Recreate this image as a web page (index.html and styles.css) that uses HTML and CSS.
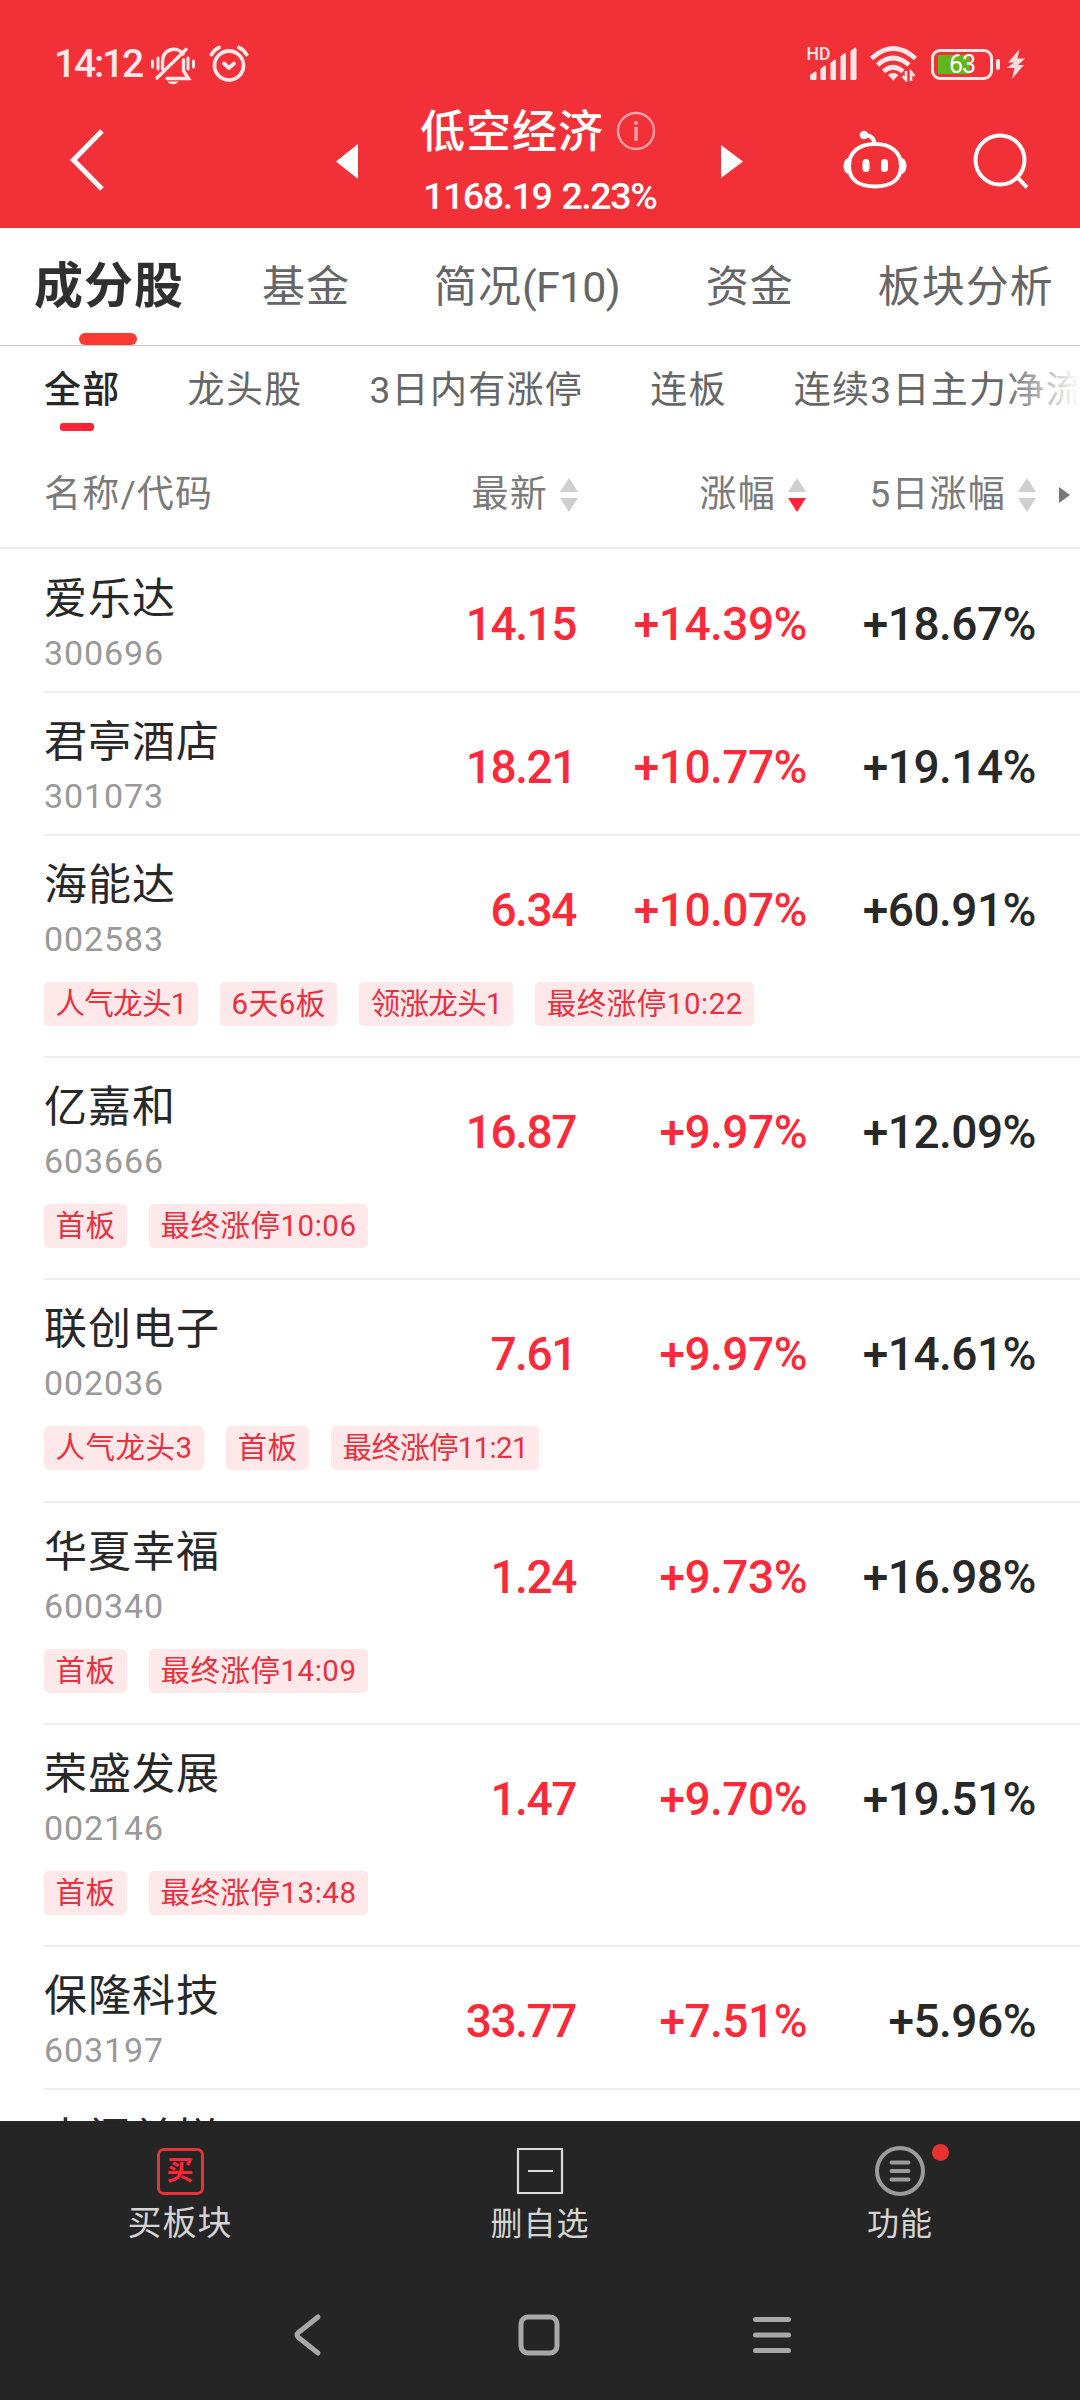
FILE: index.html
```html
<!DOCTYPE html>
<html lang="zh-CN">
<head>
    <meta charset="UTF-8">
    <meta name="viewport" content="width=device-width, initial-scale=1.0">
    <title>低空经济</title>
    <link rel="stylesheet" href="styles.css">
</head>
<body>

<header class="header">
    <div class="status-bar">
        <span class="time">14:12</span>
        <svg class="icon-mute" width="46" height="40" viewBox="0 0 46 40" fill="none" stroke="#ffe6e7" stroke-width="3.4" stroke-linecap="round">
            <path d="M2.500 15v6M8 12v11M38 12v11M43.500 15v6" stroke-width="3"/>
            <path d="M12.500 23v-7c0-14 15-16 20.500-8M33.500 14v11l5 7.500H17"/>
            <path d="M7 32L36 3.500"/>
            <path d="M17.500 35.500h11c-2 3.500-9 3.500-11 0z" fill="#ffe6e7" stroke="none"/>
        </svg>
        <svg class="icon-alarm" width="40" height="38" viewBox="0 0 40 38" fill="none" stroke="#ffe6e7" stroke-width="3.800" stroke-linecap="round" stroke-linejoin="round">
            <circle cx="20" cy="20.500" r="14.500"/>
            <path d="M15 18.500l5 4.500 5-4.500"/>
            <path d="M2.500 9.500q3-5 7.500-7M37.500 9.500q-3-5-7.500-7"/>
        </svg>
        <svg class="icon-signal" width="52" height="34" viewBox="0 0 52 34" fill="#ffe6e7">
            <text x="-.5" y="12.500" class="hd">HD</text>
            <path d="M3 32v-4l5-3.500q1.500 0 1.500 1.500v6q0 1-1 1H4q-1 0-1-1zM13.500 32V22l4-3.500q1.500 0 1.500 1.500v12q0 1-1 1h-3.500q-1 0-1-1zM23.500 32V16l4-3.500q1.500 0 1.500 1.500v18q0 1-1 1h-3.500q-1 0-1-1zM33.500 32V9.500l4-3.500q1.500 0 1.500 1.500V32q0 1-1 1h-3.500q-1 0-1-1zM43.500 32V4l4.500-3.500q1.500 0 1.500 1.500v30q0 1-1 1h-4q-1 0-1-1z"/>
        </svg>
        <svg class="icon-wifi" width="48" height="36" viewBox="0 0 48 36" fill="none" stroke="#ffe6e7" stroke-width="4.600">
            <path d="M1.500 12.500Q23 -7.500 45.500 12.500M7.500 19Q23 5 39 19M13.500 25.500Q23 17 33 25.500"/>
            <path d="M18 29q5-4 10.500 0l-5.200 5.500z" fill="#ffe6e7" stroke="none"/>
            <path d="M36 25v9l-3.500-4M41 35v-9l3.500 4" stroke-width="2.600"/>
        </svg>
        <div class="battery"><span class="battery-num">63</span></div>
        <svg class="icon-bolt" width="18" height="32" viewBox="0 0 18 32" fill="#ffdcdd">
            <path d="M12.500 1L1 14.500h6L0 20h7.500L5 31l12-14h-6l7-6.500h-7.500z"/>
        </svg>
    </div>

    <div class="title-bar">
        <svg class="icon-back" width="36" height="62" viewBox="0 0 36 62" fill="none" stroke="#fff" stroke-width="5"><path d="M33 2L4.500 31 33 60"/></svg>
        <svg class="icon-prev" width="22" height="35" viewBox="0 0 22 35" fill="#fff"><path d="M22 0v35L0 17.500z"/></svg>
        <div class="title">
            <div class="title-name">
                <span>低空经济</span>
                <svg width="40" height="40" viewBox="0 0 40 40" fill="none" stroke="#fba3a6" stroke-width="2.400">
                    <circle cx="20" cy="20" r="18"/>
                    <path d="M20 16v14" stroke-width="3.400"/>
                    <circle cx="20" cy="12" r="2.100" fill="#fba3a6" stroke="none"/>
                </svg>
            </div>
            <div class="title-index">1168.19 2.23%</div>
        </div>
        <svg class="icon-next" width="22" height="33" viewBox="0 0 22 33" fill="#fff"><path d="M0 0v33l22-16.500z"/></svg>
        <svg class="icon-robot" width="64" height="60" viewBox="0 0 64 60" fill="none" stroke="#fff" stroke-width="4">
            <path d="M32 14C48 14 58 22 58 36S48 56.500 32 56.500 6 50 6 36 16 14 32 14z"/>
            <path d="M31.500 14C31 8 27 5 21 5"/>
            <circle cx="21" cy="5" r="4.300" fill="#fff" stroke="none"/>
            <path d="M5 28c-6 2-6 14 0 16zM59 28c6 2 6 14 0 16z" fill="#fff" stroke="none"/>
            <path d="M23 32.500v6M41.500 32.500v6" stroke-width="7" stroke-linecap="round"/>
        </svg>
        <svg class="icon-search" width="56" height="56" viewBox="0 0 56 56" fill="none" stroke="#fff" stroke-width="4"><circle cx="27" cy="27" r="24.500"/><path d="M44 44l10 10.500"/></svg>
    </div>
</header>

<nav class="tabs">
    <a class="tab active">成分股</a>
    <a class="tab">基金</a>
    <a class="tab">简况<span class="f10">(F10)</span></a>
    <a class="tab">资金</a>
    <a class="tab">板块分析</a>
</nav>

<nav class="filters">
    <a class="filter active">全部</a>
    <a class="filter">龙头股</a>
    <a class="filter">3日内有涨停</a>
    <a class="filter">连板</a>
    <a class="filter">连续3日主力净流入</a>
</nav>

<div class="list-head">
    <span class="col-name">名称/代码</span>
    <span class="col">最新<i class="sort"></i></span>
    <span class="col">涨幅<i class="sort desc"></i></span>
    <span class="col">5日涨幅<i class="sort"></i></span>
    <i class="more"></i>
</div>

<main class="list">
    <div class="row">
        <div class="stock"><div class="name">爱乐达</div><div class="code">300696</div></div>
        <div class="num price up">14.15</div><div class="num up">+14.39%</div><div class="num">+18.67%</div>
    </div>
    <div class="row">
        <div class="stock"><div class="name">君亭酒店</div><div class="code">301073</div></div>
        <div class="num price up">18.21</div><div class="num up">+10.77%</div><div class="num">+19.14%</div>
    </div>
    <div class="row tagged">
        <div class="stock"><div class="name">海能达</div><div class="code">002583</div></div>
        <div class="num price up">6.34</div><div class="num up">+10.07%</div><div class="num">+60.91%</div>
        <div class="tags"><span class="tight">人气龙头1</span><span>6天6板</span><span class="tight">领涨龙头1</span><span>最终涨停10:22</span></div>
    </div>
    <div class="row tagged">
        <div class="stock"><div class="name">亿嘉和</div><div class="code">603666</div></div>
        <div class="num price up">16.87</div><div class="num up">+9.97%</div><div class="num">+12.09%</div>
        <div class="tags"><span>首板</span><span>最终涨停10:06</span></div>
    </div>
    <div class="row tagged">
        <div class="stock"><div class="name">联创电子</div><div class="code">002036</div></div>
        <div class="num price up">7.61</div><div class="num up">+9.97%</div><div class="num">+14.61%</div>
        <div class="tags"><span>人气龙头3</span><span>首板</span><span class="tight">最终涨停11:21</span></div>
    </div>
    <div class="row tagged">
        <div class="stock"><div class="name">华夏幸福</div><div class="code">600340</div></div>
        <div class="num price up">1.24</div><div class="num up">+9.73%</div><div class="num">+16.98%</div>
        <div class="tags"><span>首板</span><span>最终涨停14:09</span></div>
    </div>
    <div class="row tagged">
        <div class="stock"><div class="name">荣盛发展</div><div class="code">002146</div></div>
        <div class="num price up">1.47</div><div class="num up">+9.70%</div><div class="num">+19.51%</div>
        <div class="tags"><span>首板</span><span>最终涨停13:48</span></div>
    </div>
    <div class="row">
        <div class="stock"><div class="name">保隆科技</div><div class="code">603197</div></div>
        <div class="num price up">33.77</div><div class="num up">+7.51%</div><div class="num">+5.96%</div>
    </div>
    <div class="row">
        <div class="stock"><div class="name">中门兰拼</div></div>
    </div>
</main>

<footer class="footer">
    <div class="actions">
        <a class="action buy">
            <span class="buy-icon">买</span>
            <span>买板块</span>
        </a>
        <a class="action">
            <svg width="50" height="50" viewBox="0 0 50 50" fill="none" stroke="#dcdcdc" stroke-width="2.200"><path d="M3 3h44v44H3zM13 25h25"/></svg>
            <span>删自选</span>
        </a>
        <a class="action">
            <span class="menu-icon">
                <svg width="50" height="50" viewBox="0 0 50 50" fill="none" stroke="#9b9b9b" stroke-width="4" stroke-linecap="round"><circle cx="25" cy="25" r="23"/><path d="M16.500 16.500h17M16.500 25h17M16.500 33.500h17"/></svg>
                <i class="dot"></i>
            </span>
            <span>功能</span>
        </a>
    </div>
    <div class="system-nav">
        <svg width="42" height="44" viewBox="0 0 42 44"><path d="M33 4L13.500 19.500q-3 2.500 0 5L33 40"/></svg>
        <svg width="42" height="44" viewBox="0 0 42 44"><rect x="3" y="4" width="36" height="36" rx="7"/></svg>
        <svg width="42" height="44" viewBox="0 0 42 44"><path d="M4.500 6.500h33M4.500 22h33M4.500 37.500h33"/></svg>
    </div>
</footer>

</body>
</html>
```

FILE: styles.css
```css
* {
    box-sizing: border-box;
}
body {
    margin: 0;
    width: 1080px;
    height: 2400px;
    overflow: hidden;
    display: flex;
    flex-direction: column;
    background-color: #fff;
    color: #282828;
    font-family: Roboto, "Noto Sans CJK SC", sans-serif;
}
i {
    font-style: normal;
}
svg {
    display: block;
    flex: none;
}

/* header */
.header {
    height: 228px;
    flex: none;
    background-color: #f23038;
    color: #fff;
}
.status-bar {
    display: flex;
    align-items: center;
    height: 96px;
    padding: 32px 54px 0 54px;
    color: #ffe6e7;
}
.time {
    width: 96px;
    font-size: 39px;
    font-weight: 500;
    line-height: 40px;
    letter-spacing: -2.200px;
    white-space: nowrap;
}
.icon-mute {
    margin-top: 3px;
}
.icon-alarm {
    margin-left: 13px;
}
.icon-signal {
    margin-left: auto;
    overflow: visible;
}
.hd {
    font-size: 17.500px;
    font-weight: 500;
}
.icon-wifi {
    margin-left: 11px;
}
.battery {
    position: relative;
    width: 62px;
    height: 31px;
    margin-left: 13px;
    border: 3px solid #ffe6e7;
    border-radius: 9px;
    background: linear-gradient(#62b51b, #62b51b) 4px 3px / 32px 19px no-repeat;
    color: #fff;
    text-align: center;
}
.battery::after {
    content: "";
    position: absolute;
    right: -10px;
    top: 7px;
    width: 4px;
    height: 11px;
    border-radius: 2px;
    background-color: #ffe6e7;
}
.battery-num {
    display: block;
    font-size: 25px;
    line-height: 26px;
    letter-spacing: -1px;
}
.icon-bolt {
    margin-left: 14px;
    margin-right: 1px;
}
.title-bar {
    display: flex;
    height: 132px;
    padding: 0 50px 0 69px;
}
.icon-back {
    margin-top: 33px;
}
.icon-prev {
    margin-top: 48px;
    margin-left: 231px;
}
.title {
    width: 363px;
    padding-left: 62px;
}
.title-name {
    display: flex;
    align-items: center;
    gap: 12px;
    height: 64px;
    padding-top: 6px;
    font-size: 45px;
    font-weight: 500;
    line-height: 60px;
    letter-spacing: 1px;
    white-space: nowrap;
}
.title-name span {
    margin-top: 3px;
}
.title-index {
    font-size: 37.500px;
    font-weight: 500;
    line-height: 73px;
    letter-spacing: -1.400px;
    word-spacing: 2px;
    padding-left: 3px;
    white-space: nowrap;
}
.icon-next {
    margin-top: 49px;
}
.icon-robot {
    margin-top: 34px;
    margin-left: 100px;
}
.icon-search {
    margin-top: 37px;
    margin-left: 66px;
}

/* tabs */
.tabs {
    display: flex;
    flex: none;
    gap: 84px;
    height: 118px;
    padding-left: 34px;
    border-bottom: 1px solid #c8c8c8;
    font-size: 43px;
    line-height: 118px;
    letter-spacing: 1px;
    color: #666;
    white-space: nowrap;
}
.tab {
    position: relative;
}
.f10 {
    letter-spacing: -.800px;
    margin-right: 2px;
}
.tab.active {
    margin-right: -6px;
    color: #303030;
    font-size: 49px;
    font-weight: 700;
}
.tab.active::after {
    content: "";
    position: absolute;
    left: 45px;
    bottom: 0;
    width: 58px;
    height: 12px;
    border-radius: 6px;
    background-color: #fc3a32;
}
.filters {
    position: relative;
    display: flex;
    flex: none;
    gap: 67px;
    height: 92px;
    padding-left: 44px;
    overflow: hidden;
    font-size: 37px;
    line-height: 90px;
    letter-spacing: 1.300px;
    color: #666;
    white-space: nowrap;
}
.filters::after {
    content: "";
    position: absolute;
    top: 0;
    right: 0;
    width: 80px;
    height: 92px;
    background: linear-gradient(to right, rgba(255, 255, 255, 0), #fff);
}
.filter {
    position: relative;
}
.filter.active {
    color: #282828;
    font-weight: 500;
}
.filter.active::after {
    content: "";
    position: absolute;
    left: 16px;
    top: 77px;
    width: 34px;
    height: 8px;
    border-radius: 3px;
    background-color: #ff2436;
}

/* list */
.list-head {
    display: grid;
    grid-template-columns: 304px 230px 228px 230px auto;
    flex: none;
    height: 111px;
    padding-left: 44px;
    border-bottom: 2px solid #ededed;
    font-size: 37px;
    line-height: 114px;
    letter-spacing: 1.200px;
    color: #7a7a7a;
    white-space: nowrap;
}
.col {
    display: flex;
    justify-content: flex-end;
}
.sort {
    display: flex;
    flex-direction: column;
    align-self: center;
    gap: 6px;
    margin-left: 12px;
}
.sort::before, .sort::after {
    content: "";
    border: 9.500px solid transparent;
    border-top-width: 0;
    border-bottom: 14px solid #cfcfcf;
}
.sort::after {
    border-bottom-width: 0;
    border-top: 14px solid #cfcfcf;
}
.sort.desc::after {
    border-top-color: #ff2436;
}
.more {
    align-self: center;
    width: 0;
    margin-left: 23px;
    border: 8px solid transparent;
    border-left: 11px solid #777;
    border-right-width: 0;
}
.list {
    flex: 1;
    min-height: 0;
    padding-top: .500px;
    overflow: hidden;
}
.row {
    display: grid;
    grid-template-columns: 534px 229px 229px;
    grid-template-rows: 141px;
    height: 143px;
    margin-left: 44px;
    border-bottom: 2px solid #eee;
}
.row.tagged {
    height: 222.400px;
}
.stock {
    grid-row: 1;
    grid-column: 1;
    padding-top: 21px;
}
.name {
    font-size: 43px;
    line-height: 56px;
    letter-spacing: 1px;
}
.code {
    font-size: 34px;
    line-height: 53px;
    letter-spacing: .900px;
    color: #999;
}
.num {
    grid-row: 1;
    font-size: 46px;
    font-weight: 500;
    line-height: 148px;
    letter-spacing: -.500px;
    text-align: right;
}
.price {
    grid-column: 1;
    padding-right: 2px;
    letter-spacing: -1.400px;
}
.up {
    color: #fb2a3a;
}
.tags {
    grid-row: 2;
    grid-column: 1 / -1;
    display: flex;
    gap: 22px;
    padding-top: 5px;
}
.tags span {
    height: 44px;
    padding: 0 11.500px;
    border-radius: 5px;
    background-color: #ffe8ea;
    color: #e8303f;
    font-size: 29.500px;
    line-height: 45px;
    letter-spacing: .500px;
    white-space: nowrap;
}
.tags .tight {
    letter-spacing: -.700px;
}

/* bottom */
.footer {
    height: 279px;
    flex: none;
    background-color: #252525;
}
.actions {
    display: flex;
    height: 148px;
    padding-top: 25px;
}
.action {
    flex: 1;
    display: flex;
    flex-direction: column;
    align-items: center;
    color: #d4d4d4;
    font-size: 32px;
    line-height: 57px;
    letter-spacing: 1px;
}
.action.buy {
    font-size: 34px;
    line-height: 55px;
}
.buy-icon {
    width: 47px;
    height: 47px;
    margin: 2px 0 1px;
    border: 3px solid #e8333b;
    border-radius: 7px;
    color: #ff2436;
    font-size: 27px;
    font-weight: 700;
    line-height: 40px;
    letter-spacing: 0;
    text-align: center;
}
.menu-icon {
    position: relative;
}
.dot {
    position: absolute;
    top: -2px;
    left: 57px;
    width: 17px;
    height: 17px;
    border-radius: 50%;
    background-color: #e83232;
}
.system-nav {
    display: flex;
    justify-content: center;
    gap: 191px;
    padding-top: 44px;
    padding-right: 3px;
}
.system-nav svg {
    fill: none;
    stroke: #a8a8a8;
    stroke-width: 5;
    stroke-linecap: round;
}
```
